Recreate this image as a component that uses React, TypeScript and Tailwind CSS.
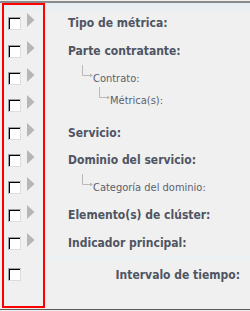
import React from "react";

const F = "[font-family:'DejaVu_Sans_Condensed','DejaVu_Sans',sans-serif] [font-stretch:condensed]";

function Check() {
  return (
    <div className="w-[13px] h-[13px] border border-[#a0a0a0] border-b-[#dcdcdc] border-r-[#dcdcdc] bg-white shrink-0">
      <div className="w-full h-full border-t border-l border-black" />
    </div>
  );
}

function Tri() {
  return (
    <svg width="8" height="14" viewBox="0 0 8 14" className="shrink-0 -mt-[4px]">
      <polygon points="0,0 7.5,7 0,14" fill="#b6b6b6" />
    </svg>
  );
}

function Elbow() {
  return (
    <svg width="12" height="12" viewBox="0 0 12 12" className="shrink-0">
      <path d="M0.5 0 V10.5 H9" stroke="#b9b9b9" strokeWidth="1" fill="none" />
      <polygon points="8,8.5 11,10.5 8,12.5" fill="#b9b9b9" />
    </svg>
  );
}

type Row = {
  h: number;
  label: string;
  kind: "bold" | "sub1" | "sub2" | "right";
  arrow: boolean;
};

const rows: Row[] = [
  { h: 28, label: "Tipo de métrica:", kind: "bold", arrow: true },
  { h: 27, label: "Parte contratante:", kind: "bold", arrow: true },
  { h: 27, label: "Contrato:", kind: "sub1", arrow: true },
  { h: 28, label: "Métrica(s):", kind: "sub2", arrow: true },
  { h: 27, label: "Servicio:", kind: "bold", arrow: true },
  { h: 27, label: "Dominio del servicio:", kind: "bold", arrow: true },
  { h: 28, label: "Categoría del dominio:", kind: "sub1", arrow: true },
  { h: 28, label: "Elemento(s) de clúster:", kind: "bold", arrow: true },
  { h: 31, label: "Indicador principal:", kind: "bold", arrow: true },
  { h: 30, label: "Intervalo de tiempo:", kind: "right", arrow: false },
];

export default function App() {
  return (
    <div className={`relative w-[250px] h-[311px] bg-[#f0f0f0] overflow-hidden ${F}`}>
      <div className="absolute left-0 right-0 top-[1px] h-[2px] bg-[#8a8a8a]" />
      <div className="absolute left-0 right-0 top-[3px] h-[10px] bg-gradient-to-b from-[#e6eef3] to-[#f0f0f0]" />
      <div className="absolute left-[40px] right-0 top-[256px] h-[5px] bg-[#ecf1f4]" />
      <div className="absolute left-0 right-0 top-[309px] h-[1px] bg-[#5a5a5a]" />

      <div className="relative flex flex-col pt-[17px]">
        {rows.map((r, i) => (
          <div key={i} className="flex items-start" style={{ height: r.h }}>
            <div className="ml-[8px] flex items-start gap-[6px] w-[40px] shrink-0">
              <Check />
              {r.arrow && <Tri />}
            </div>
            {r.kind === "bold" && (
              <div className="ml-[20px] -mt-[1px] text-[12px] font-bold leading-[15px] text-[#4f5562] whitespace-nowrap">
                {r.label}
              </div>
            )}
            {r.kind === "sub1" && (
              <div className="ml-[34px] -mt-[7px] flex items-start">
                <Elbow />
                <span className="mt-[7px] -ml-[1px] text-[11px] leading-[14px] text-[#5a616d] whitespace-nowrap">
                  {r.label}
                </span>
              </div>
            )}
            {r.kind === "sub2" && (
              <div className="ml-[51px] -mt-[12px] flex items-start">
                <Elbow />
                <span className="mt-[7px] -ml-[1px] text-[11px] leading-[14px] text-[#5a616d] whitespace-nowrap">
                  {r.label}
                </span>
              </div>
            )}
            {r.kind === "right" && (
              <div className="flex-1 pr-[10px] text-right text-[12px] font-bold leading-[15px] text-[#4f5562] whitespace-nowrap">
                {r.label}
              </div>
            )}
          </div>
        ))}
      </div>

      <div className="absolute left-[2px] top-[3px] w-[43px] h-[305px] border-2 border-[#ff0000]" />
    </div>
  );
}
